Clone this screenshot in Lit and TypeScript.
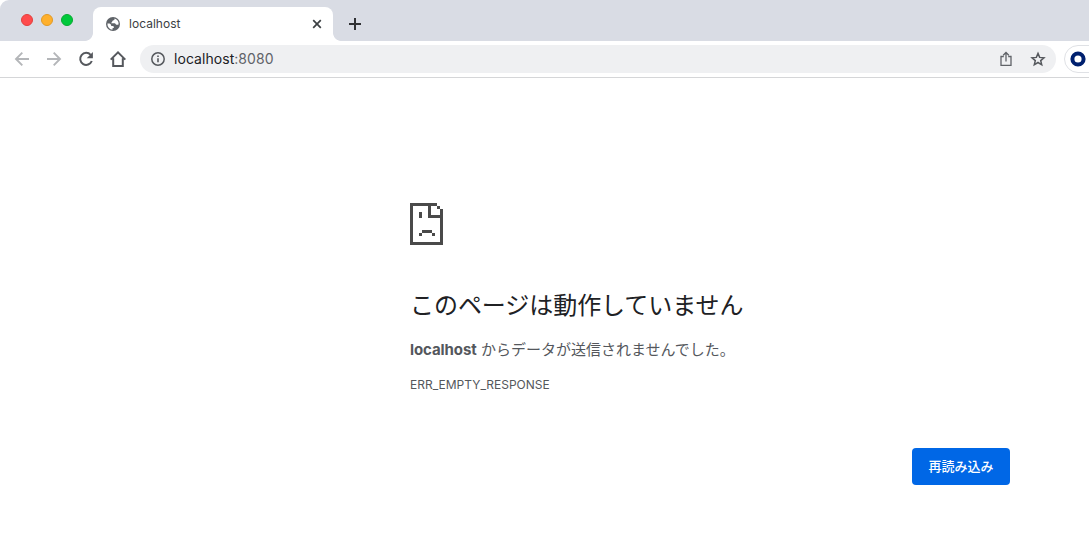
import { LitElement, html, css, svg } from "lit";
import { customElement } from "lit/decorators.js";

@customElement("tab-strip")
class TabStrip extends LitElement {
  static styles = css`
    :host { display: flex; height: 41px; background: #d9dce4; border-top-left-radius: 9px; box-sizing: border-box; }
    .lights { display: flex; flex: none; gap: 8px; padding: 14px 0 0 21px; width: 93px; box-sizing: border-box; }
    .light { flex: none; width: 12px; height: 12px; border-radius: 50%; box-sizing: border-box; border: 1px solid #e2403d; background: #ff4b4c; }
    .amber { background: #ffb02c; border-color: #e19a25; }
    .green { background: #00c93b; border-color: #08aa31; }
    .tab { position: relative; display: flex; align-items: center; width: 240px; height: 34px; margin: 7px 0 0; padding: 0 10px 0 12px; background: #fff; border-radius: 8px 8px 0 0; box-sizing: border-box; }
    .tab::before, .tab::after { content: ""; position: absolute; bottom: 0; width: 8px; height: 8px; }
    .tab::before { left: -8px; background: radial-gradient(circle at 0 0, transparent 7.5px, #fff 8.2px); }
    .tab::after { right: -8px; background: radial-gradient(circle at 100% 0, transparent 7.5px, #fff 8.2px); }
    .title { flex: 1; margin-left: 8px; font: 12px/16px Inter, sans-serif; color: #3c4043; letter-spacing: 0.02px; }
    svg { display: block; }
    .new { margin: 17px 0 0 15px; }
  `;
  render() {
    return html`
      <div class="lights"><i class="light"></i><i class="light amber"></i><i class="light green"></i></div>
      <div class="tab">
        <svg width="16" height="16" viewBox="0 0 16 16">
          <circle cx="8" cy="8" r="7" fill="#5f6368" />
          <path d="M9.6 2.5c0 1.5-.5 1.8-1.6 2.1-.7.2-.6 1.5-1.4 1.8-.6.2-.5.8 0 .9h3c1 .1 1.1 1.4 1.9 1.5.7.1 1.3-.5 2.1-.4a5.8 5.8 0 0 0-4-5.9zM2.4 7.6a5.8 5.8 0 0 0 5.1 6.1v-1.4l1.4-.6c.2-1-.2-1.7-1.3-1.8H6.3c-.2-1.7-1.3-2.3-2.7-2.3z" fill="#fff"/>
        </svg>
        <span class="title">localhost</span>
        <svg width="12" height="12" viewBox="0 0 12 12"><path d="M2.2 2.2 9.8 9.8M9.8 2.2 2.2 9.8" stroke="#3c4043" stroke-width="1.7"/></svg>
      </div>
      <svg class="new" width="14" height="14" viewBox="0 0 14 14"><path d="M7 1v12M1 7h12" stroke="#303134" stroke-width="2"/></svg>
    `;
  }
}

@customElement("tool-bar")
class ToolBar extends LitElement {
  static styles = css`
    :host { display: flex; align-items: center; height: 37px; padding-left: 14px; background: #fff; border-bottom: 1px solid #d5d6d8; box-sizing: border-box; overflow: hidden; }
    svg { display: block; flex: none; }
    .nav { display: flex; gap: 16px; }
    .omnibox { display: flex; align-items: center; box-sizing: border-box; width: 916px; height: 28px; margin-left: 14px; padding: 0 10px; border-radius: 14px; background: #eff0f2; flex: none; }
    .url { flex: 1; margin-left: 8px; font: 14px/20px Inter, sans-serif; color: #202124; letter-spacing: 0.05px; }
    .port { color: #5f6368; }
    .star { margin-left: 16px; }
    .ext { flex: none; box-sizing: border-box; width: 60px; height: 28px; margin-left: 8px; padding: 5px; border: 1px solid #dfe1e5; border-radius: 14px; }
  `;
  render() {
    const stroke = "#55585d";
    return html`
      <div class="nav">
        <svg width="16" height="16" viewBox="0 0 16 16" fill="none" stroke="#b4b6b9" stroke-width="1.9"><path d="M15 8H2.3M8.3 1.7 2 8l6.3 6.3"/></svg>
        <svg width="16" height="16" viewBox="0 0 16 16" fill="none" stroke="#b4b6b9" stroke-width="1.9"><path d="M1 8h12.7M7.7 1.7 14 8l-6.3 6.3"/></svg>
        <svg width="16" height="16" viewBox="0 0 16 16"><path d="M12.7 3.9A6 6 0 1 0 13.8 10" fill="none" stroke=${stroke} stroke-width="2"/><path d="M14.9 1v6.2H8.7z" fill=${stroke}/></svg>
        <svg width="16" height="16" viewBox="0 0 16 16" fill="none" stroke=${stroke} stroke-width="2"><path d="M.7 8.6 8 1.4l7.3 7.2M3.2 7.2V15h9.6V7.2"/></svg>
      </div>
      <div class="omnibox">
        <svg width="16" height="16" viewBox="0 0 16 16"><circle cx="8" cy="8" r="6.2" fill="none" stroke=${stroke} stroke-width="1.5"/><path d="M8 7.2v4.1M8 4.4V6" stroke=${stroke} stroke-width="1.6"/></svg>
        <span class="url">localhost<span class="port">:8080</span></span>
        <svg width="16" height="16" viewBox="0 0 16 16" fill="none" stroke="#606368" stroke-width="1.3"><path d="M5.8 5.5H3v8.8h10V5.5h-2.8M8 10.5V2M5.2 4.3 8 1.5l2.8 2.8"/></svg>
        <svg class="star" width="16" height="16" viewBox="0 0 16 16"><path d="m8 2.4 1.65 4 4.3.37-3.25 2.8 1 4.2L8 11.5l-3.7 2.27 1-4.2-3.25-2.8 4.3-.37z" fill="none" stroke=${stroke} stroke-width="1.5"/></svg>
      </div>
      <div class="ext"><svg width="16" height="16" viewBox="0 0 16 16"><circle cx="8" cy="8" r="5.6" fill="none" stroke="#00206f" stroke-width="4"/></svg></div>
    `;
  }
}

// Rectangles of the pixelated sad page: x, y, width, height.
const SAD_PAGE = [
  [0, 0, 27, 3], [0, 0, 3, 42], [0, 39, 33, 3], [30, 6, 3, 36],
  [27, 3, 3, 3], [18, 0, 3, 15], [18, 12, 15, 3],
  [9, 9, 3, 6], [12, 27, 10, 3], [9, 30, 3, 3], [22, 30, 3, 3],
];

@customElement("error-page")
class ErrorPage extends LitElement {
  static styles = css`
    :host { display: block; width: 600px; margin-left: 410px; padding-top: 125px; font-family: Inter, "Noto Sans CJK JP", sans-serif; color: #54575c; }
    .icon { display: block; }
    h1 { margin: 42px 0 0; font: 400 24px/34px "Noto Sans CJK JP", sans-serif; color: #202124; white-space: nowrap; letter-spacing: -0.05px; }
    p { margin: 17px 0 0; font-size: 15px; line-height: 24px; white-space: nowrap; }
    b { letter-spacing: -0.08px; }
    .code { margin-top: 14px; font-size: 12px; line-height: 18px; }
    .actions { display: flex; justify-content: flex-end; margin-top: 54px; }
    button { width: 98px; height: 37px; padding: 0 0 2px; border: 0; border-radius: 4px; background: #0067e6; color: #fff; font: 500 13px/20px "Noto Sans CJK JP", sans-serif; }
  `;
  render() {
    return html`
      <svg class="icon" width="33" height="42" fill="#4a4a4a" shape-rendering="crispEdges">
        ${SAD_PAGE.map(([x, y, w, h]) => svg`<rect x=${x} y=${y} width=${w} height=${h} />`)}
      </svg>
      <h1>このページは動作していません</h1>
      <p><b>localhost</b> からデータが送信されませんでした。</p>
      <div class="code">ERR_EMPTY_RESPONSE</div>
      <div class="actions"><button>再読み込み</button></div>
    `;
  }
}

@customElement("app-root")
class AppRoot extends LitElement {
  static styles = css`
    :host { display: block; height: 534px; background: #fff; overflow: hidden; }
  `;
  render() {
    return html`<tab-strip></tab-strip><tool-bar></tool-bar><error-page lang="ja"></error-page>`;
  }
}
